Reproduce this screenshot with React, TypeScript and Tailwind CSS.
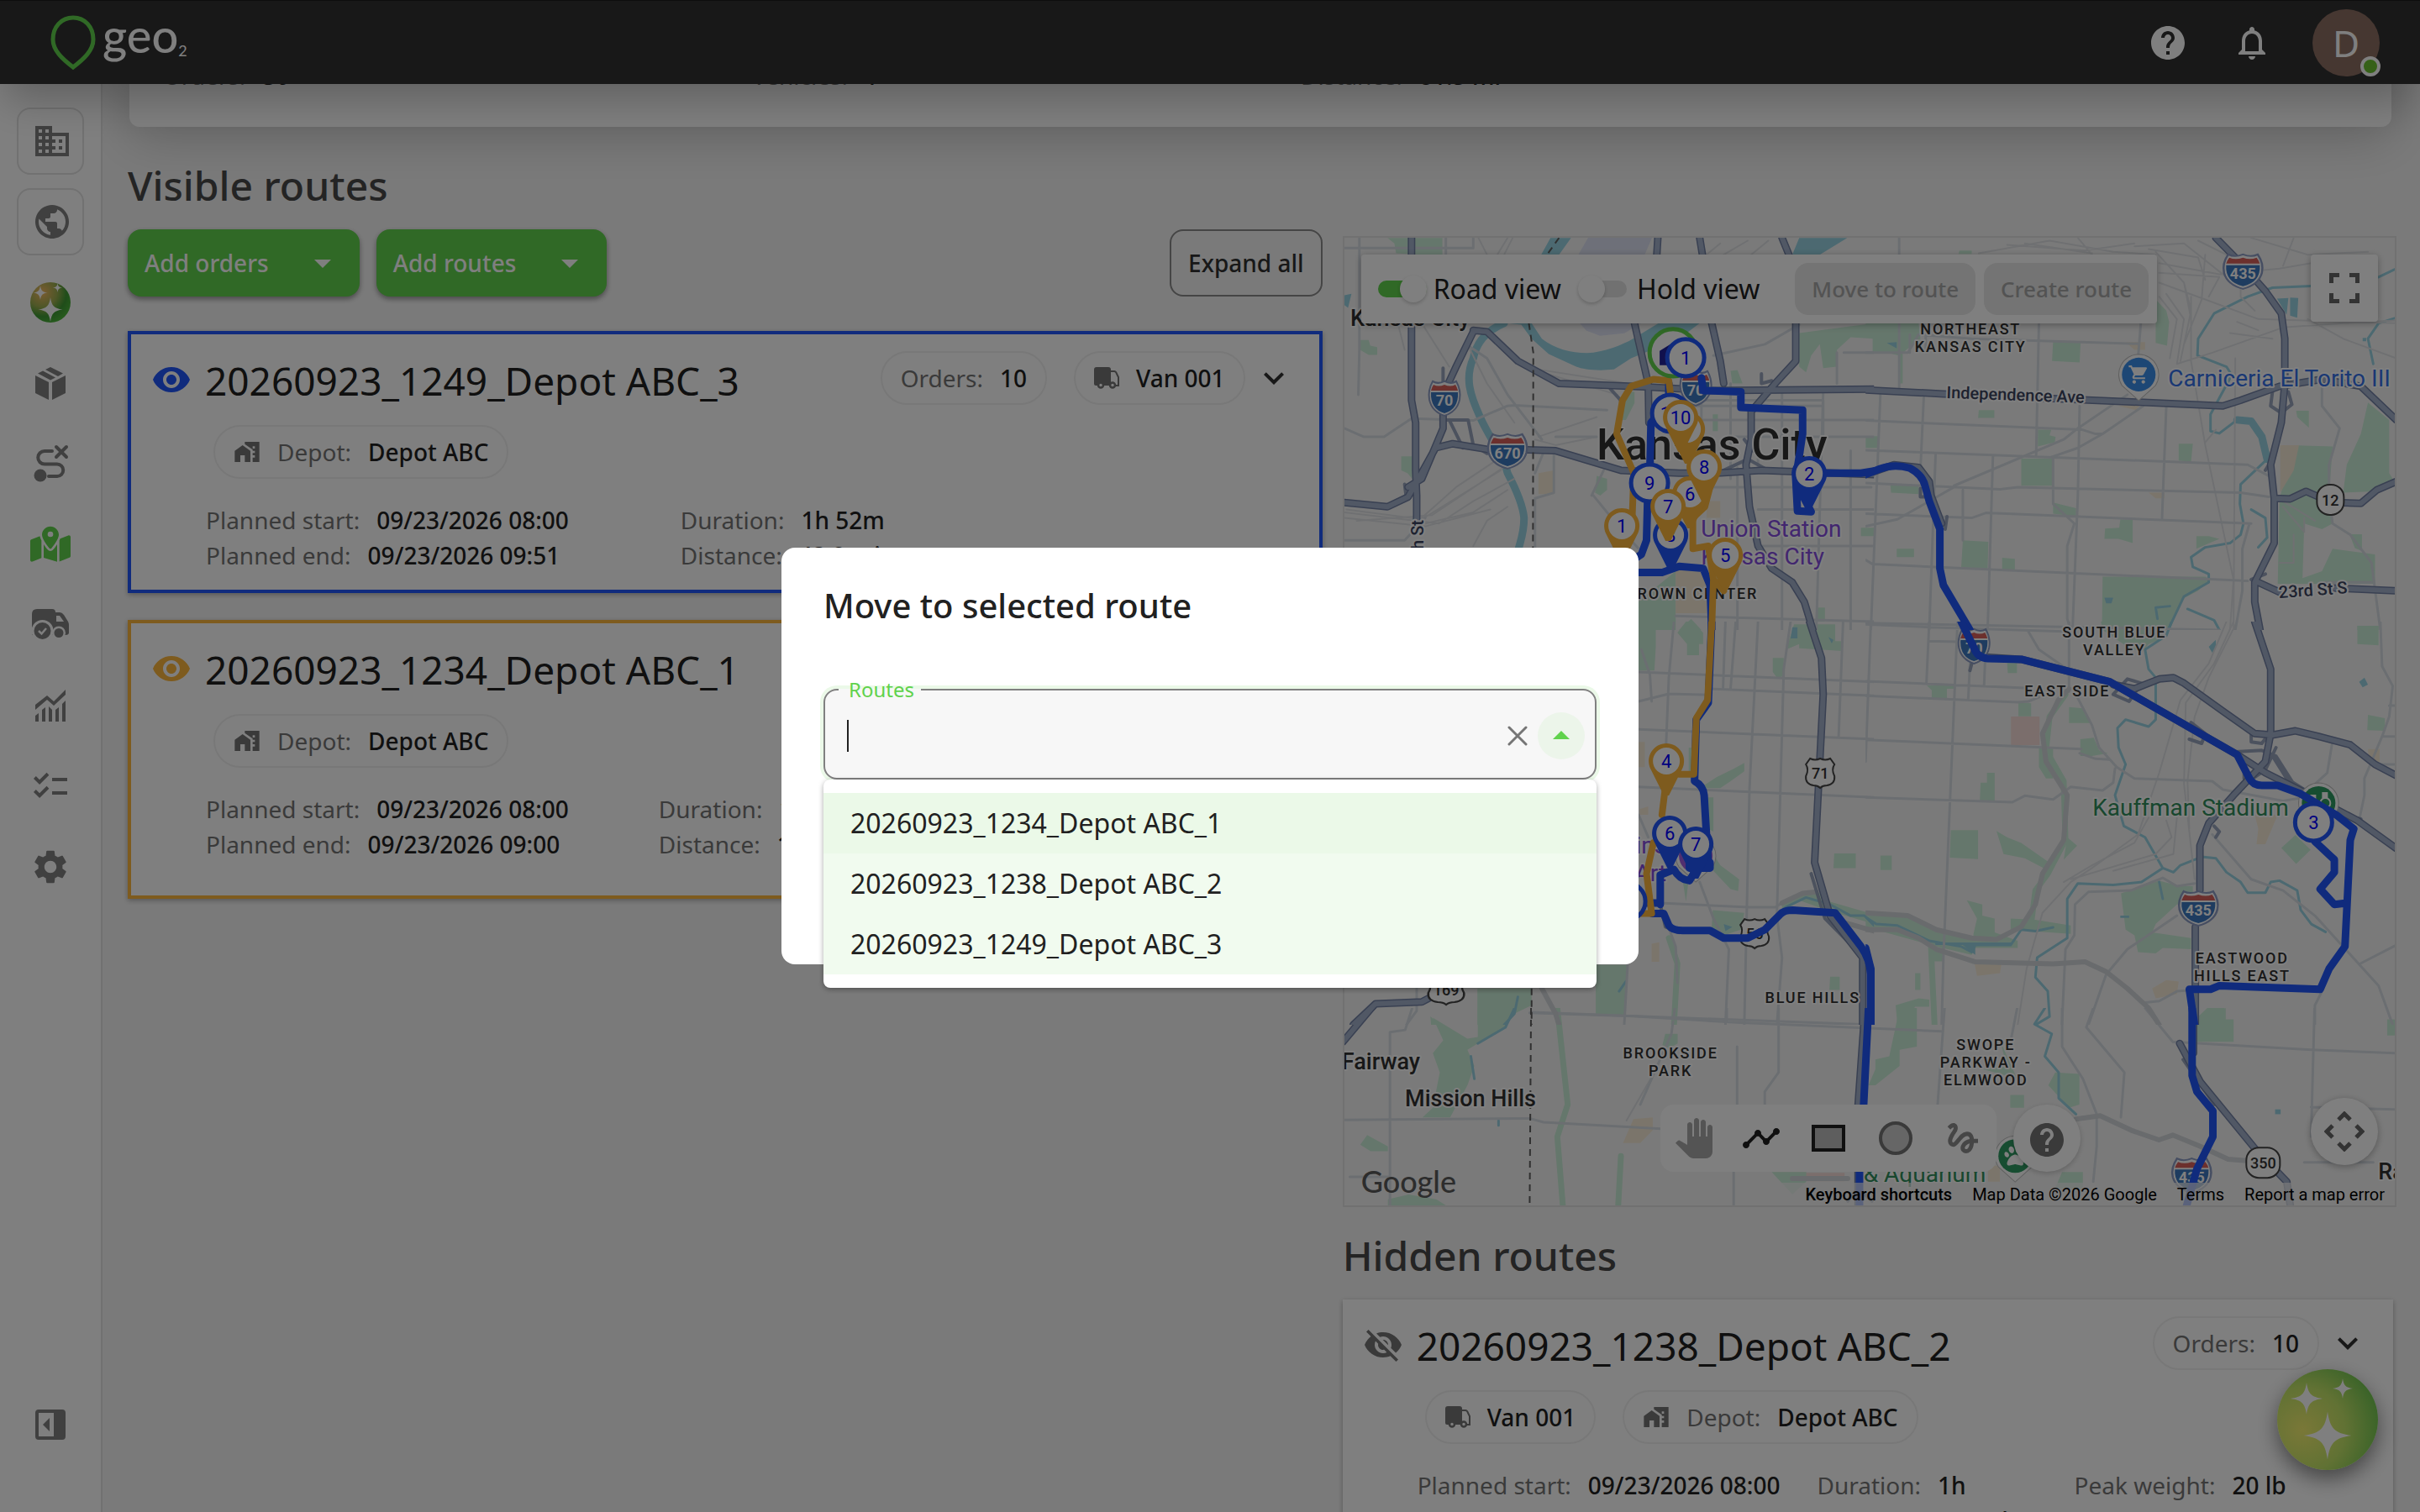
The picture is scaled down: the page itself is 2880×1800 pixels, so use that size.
import type { ReactNode } from 'react';
import clsx from 'clsx';
import {
  MdArrowDropDown,
  MdArrowDropUp,
  MdChecklist,
  MdDomain,
  MdGesture,
  MdHelp,
  MdHomeWork,
  MdKeyboardArrowDown,
  MdLocalShipping,
  MdNotificationsNone,
  MdPanTool,
  MdPublic,
  MdSettings,
  MdShoppingCart,
  MdStraighten,
  MdTimeline,
  MdVisibility,
  MdVisibilityOff,
} from 'react-icons/md';
import { FaMapLocationDot, FaPaw } from 'react-icons/fa6';

const BLUE = '#2056fb';
const AMBER = '#fcb63c';

const STAR = 'M0-10C1-3 3-1 10 0C3 1 1 3 0 10C-1 3-3 1-10 0C-3-1-1-3 0-10Z';

interface Stat {
  label: string;
  value: string;
}

interface RouteInfo {
  name: string;
  visible: boolean;
  eyeClass: string;
  cardClass: string;
  statsClass: string;
  vanInHeader: boolean;
  columns: Stat[][];
}

const routeA: RouteInfo = {
  name: '20260923_1249_Depot ABC_3',
  visible: true,
  eyeClass: 'text-[#2056fb]',
  cardClass: 'border-4 border-[#2056fb] pb-5',
  statsClass: 'gap-[133px]',
  vanInHeader: true,
  columns: [
    [
      { label: 'Planned start:', value: '09/23/2026 08:00' },
      { label: 'Planned end:', value: '09/23/2026 09:51' },
    ],
    [
      { label: 'Duration:', value: '1h 52m' },
      { label: 'Distance:', value: '43.9 mi' },
    ],
  ],
};

const routeB: RouteInfo = {
  name: '20260923_1234_Depot ABC_1',
  visible: true,
  eyeClass: 'text-[#fcb63c]',
  cardClass: 'border-4 border-[#fcb63c] pb-10',
  statsClass: 'gap-[107px]',
  vanInHeader: true,
  columns: [
    [
      { label: 'Planned start:', value: '09/23/2026 08:00' },
      { label: 'Planned end:', value: '09/23/2026 09:00' },
    ],
    [
      { label: 'Duration:', value: '1h' },
      { label: 'Distance:', value: '17.8 mi' },
    ],
  ],
};

const hiddenRoute: RouteInfo = {
  name: '20260923_1238_Depot ABC_2',
  visible: false,
  eyeClass: 'text-[#757575]',
  cardClass: 'mr-1 pb-10',
  statsClass: 'gap-11',
  vanInHeader: false,
  columns: [
    [
      { label: 'Planned start:', value: '09/23/2026 08:00' },
      { label: 'Planned end:', value: '09/23/2026 09:00' },
    ],
    [
      { label: 'Duration:', value: '1h' },
      { label: 'Distance:', value: '19.79 km' },
    ],
    [{ label: 'Peak weight:', value: '20 lb' }],
  ],
};

const routeOptions = [routeB.name, hiddenRoute.name, routeA.name];

/* ---------- Icons ---------- */

function LogoIcon() {
  return (
    <svg width="54" height="66" viewBox="0 0 54 66" fill="none">
      <path
        d="M27 3C13 3 3 14 3 29C3 42 14 52 27 62C40 52 51 42 51 29C51 14 41 3 27 3Z"
        stroke="#60d24c"
        strokeWidth="5"
      />
    </svg>
  );
}

function SparkleBall({ size, id }: { size: number; id: string }) {
  return (
    <svg width={size} height={size} viewBox="0 0 48 48">
      <defs>
        <radialGradient id={id} cx="0.3" cy="0.25" r="0.8">
          <stop offset="0" stopColor="#f5b862" />
          <stop offset="0.45" stopColor="#9fae50" />
          <stop offset="0.75" stopColor="#3f9a34" />
          <stop offset="1" stopColor="#4cb53a" />
        </radialGradient>
      </defs>
      <circle cx="24" cy="24" r="24" fill={`url(#${id})`} />
      <path d={STAR} transform="translate(24 32.500) scale(1.45)" fill="#fff" />
      <path d={STAR} transform="translate(12 12.500) scale(0.86)" fill="#fff" />
      <path d={STAR} transform="translate(32.500 6.500) scale(0.55)" fill="#fff" />
    </svg>
  );
}

function AssistantBall() {
  return (
    <svg width="120" height="120" viewBox="0 0 120 120">
      <defs>
        <radialGradient id="fab" cx="0.25" cy="0.6" r="0.85">
          <stop offset="0" stopColor="#f4f070" />
          <stop offset="0.5" stopColor="#c2e468" />
          <stop offset="1" stopColor="#62c04c" />
        </radialGradient>
      </defs>
      <circle cx="60" cy="60" r="60" fill="url(#fab)" />
      <g fill="#fff">
        <path d={STAR} transform="translate(60 79) scale(2.850)" />
        <path d={STAR} transform="translate(35 35) scale(1.900)" />
        <path d={STAR} transform="translate(78 23) scale(1.200)" />
      </g>
    </svg>
  );
}

function BoxIcon() {
  return (
    <svg width="36" height="40" viewBox="0 0 36 40" fill="currentColor">
      <path d="M0 11L16 19V40L0 32ZM20 19L36 11V32L20 40ZM3 8.500L9 5.500L24 13.500L18 16.500ZM12 4L18 1L33 8.500L27 12Z" />
    </svg>
  );
}

function RouteCrossIcon() {
  return (
    <svg width="48" height="48" viewBox="0 0 48 48" fill="none" stroke="currentColor" strokeWidth="4">
      <path strokeLinecap="round" d="M26 9H17A7.500 7.500 0 0 0 17 24.500H32A7.200 7.200 0 0 1 32 39H22" />
      <path strokeLinecap="round" d="M31 4L43 16M43 4L31 16" />
      <circle cx="12" cy="38" r="7.500" fill="currentColor" stroke="none" />
    </svg>
  );
}

function TruckCheckIcon() {
  return (
    <svg width="44" height="38" viewBox="0 0 44 38" fill="currentColor">
      <path d="M6 0H24Q28 0 28 4H33Q36 4 38 7L43 15Q44 17 44 19V28Q44 31 40 31H0V6Q0 0 6 0Z" />
      <path d="M29 8H33L38 15H29Z" fill="#fff" />
      <circle cx="12.500" cy="26" r="13" fill="#fff" />
      <circle cx="32" cy="28.500" r="8" fill="#fff" />
      <circle cx="12.500" cy="26" r="10" />
      <circle cx="32" cy="28.500" r="5.500" />
      <path d="M8 26L11.500 29.500L17 23" fill="none" stroke="#fff" strokeWidth="2.500" />
    </svg>
  );
}

function ChartIcon() {
  return (
    <svg width="36" height="38" viewBox="0 0 36 38" fill="currentColor">
      <path d="M0 18L14 7L22 14L36 0V6L22 19L14 12L0 24Z" />
      <path d="M0 31L4 28V38H0ZM8 24L12 21V38H8ZM16 20L20 24V38H16ZM24 24L28 21V38H24ZM32 17L36 13V38H32Z" />
    </svg>
  );
}

function PanelToggleIcon() {
  return (
    <svg width="36" height="36" viewBox="0 0 36 36" fill="currentColor">
      <path fillRule="evenodd" d="M4 0H32Q36 0 36 4V32Q36 36 32 36H4Q0 36 0 32V4Q0 0 4 0ZM4 4V32H22V4Z" />
      <path d="M17 10L9 18L17 26Z" />
    </svg>
  );
}

function VanIcon() {
  return (
    <svg width="30" height="26" viewBox="0 0 30 26" fill="currentColor" className="text-[#757575]">
      <path d="M3 0H17Q20 0 20 3V22H2Q0 22 0 20V3Q0 0 3 0Z" />
      <path d="M20 5H24Q26 5 27 8L29 12V22H21" fill="none" stroke="currentColor" strokeWidth="2" />
      <circle cx="8" cy="21.500" r="3" fill="#fff" stroke="currentColor" strokeWidth="2.500" />
      <circle cx="22" cy="21.500" r="3" fill="#fff" stroke="currentColor" strokeWidth="2.500" />
    </svg>
  );
}

/* ---------- Shell ---------- */

function Header() {
  return (
    <header className="relative z-20 flex h-[100px] shrink-0 items-center border-t border-[#1c1c1c] bg-[#303030] pr-12 pl-[60px] shadow-[0_24px_50px_-6px_rgba(0,0,0,0.25)]">
      <a href="#home" className="flex items-center gap-2 text-white" aria-label="geo2">
        <LogoIcon />
        <span className="pb-[18px] font-[Lato] text-[56px] leading-[60px] font-medium">
          geo<sub className="text-[18px] font-normal">2</sub>
        </span>
      </a>
      <div className="ml-auto flex items-center gap-12 text-white">
        <button type="button" aria-label="Help">
          <MdHelp className="size-12" />
        </button>
        <button type="button" aria-label="Notifications" className="ml-1">
          <MdNotificationsNone className="size-12" />
        </button>
        <button
          type="button"
          aria-label="Account"
          className="relative flex size-20 items-center justify-center rounded-full bg-[#8d6e63] text-[44px]"
        >
          D
          <span className="absolute -right-px bottom-0 size-6 rounded-full border-4 border-white bg-[#6cc230]" />
        </button>
      </div>
    </header>
  );
}

function NavItem({ label, active, children }: { label: string; active?: boolean; children: ReactNode }) {
  return (
    <a
      href={`#${label.toLowerCase()}`}
      aria-label={label}
      className={clsx('flex size-12 items-center justify-center', active ? 'text-[#60d24c]' : 'text-[#808080]')}
    >
      {children}
    </a>
  );
}

function Sidebar() {
  return (
    <nav className="flex w-[122px] shrink-0 flex-col items-center border-r-2 border-[#e2e2e2] bg-white pt-7 pb-20">
      <div className="flex flex-col gap-4 text-[#808080]">
        <button type="button" aria-label="Company" className="flex size-20 items-center rounded-2xl border-2 border-[#e2e2e2] pl-4">
          <MdDomain className="size-12 shrink-0" />
        </button>
        <button type="button" aria-label="Region" className="flex size-20 items-center rounded-2xl border-2 border-[#e2e2e2] pl-4">
          <MdPublic className="size-12 shrink-0" />
        </button>
      </div>
      <div className="mt-8 flex flex-col gap-12">
        <NavItem label="Assistant">
          <SparkleBall size={48} id="nav-ball" />
        </NavItem>
        <NavItem label="Orders">
          <BoxIcon />
        </NavItem>
        <NavItem label="Planning">
          <RouteCrossIcon />
        </NavItem>
        <NavItem label="Routes" active>
          <FaMapLocationDot className="size-12" />
        </NavItem>
        <NavItem label="Vehicles">
          <TruckCheckIcon />
        </NavItem>
        <NavItem label="Reports">
          <ChartIcon />
        </NavItem>
        <NavItem label="Tasks">
          <MdChecklist className="size-12" />
        </NavItem>
        <NavItem label="Settings">
          <MdSettings className="size-12" />
        </NavItem>
      </div>
      <button type="button" aria-label="Toggle sidebar" className="mt-auto flex size-12 items-center justify-center text-[#808080]">
        <PanelToggleIcon />
      </button>
    </nav>
  );
}

/* ---------- Route cards ---------- */

function Chip({ children }: { children: ReactNode }) {
  return (
    <span className="flex h-16 items-center rounded-full border-2 border-[#f0f0f0] px-[22px] text-[28px]">
      {children}
    </span>
  );
}

function Labelled({ label, value }: Stat) {
  return (
    <span className="flex gap-5 whitespace-nowrap">
      <span className="text-[#757575]">{label}</span>
      <span className="font-medium text-[#212121]">{value}</span>
    </span>
  );
}

function VanChip() {
  return (
    <Chip>
      <VanIcon />
      <span className="ml-5 font-medium text-[#212121]">Van 001</span>
    </Chip>
  );
}

function RouteCard({ route }: { route: RouteInfo }) {
  return (
    <article className={clsx('bg-white pt-5 shadow-[0_2px_6px_rgba(0,0,0,0.3)]', route.cardClass)}>
      <div className="flex h-[68px] items-start pr-[30px] pl-6">
        <button type="button" aria-label="Toggle route" className={clsx('flex h-[68px] items-center', route.eyeClass)}>
          {route.visible ? <MdVisibility className="size-12" /> : <MdVisibilityOff className="size-12" />}
        </button>
        <h3 className="ml-4 text-[46px] leading-[70px] text-[#212121]">{route.name}</h3>
        <div className="ml-auto flex gap-8">
          <Chip>
            <Labelled label="Orders:" value="10" />
          </Chip>
          {route.vanInHeader && <VanChip />}
        </div>
        <button type="button" aria-label="Expand" className="ml-[10px] flex h-16 items-center text-[#303030]">
          <MdKeyboardArrowDown className="size-12" />
        </button>
      </div>
      <div className="mt-5 ml-[98px] flex gap-8">
        {!route.vanInHeader && <VanChip />}
        <Chip>
          <MdHomeWork className="mr-5 size-8 text-[#757575]" />
          <Labelled label="Depot:" value="Depot ABC" />
        </Chip>
      </div>
      <div className={clsx('mt-7 ml-[89px] flex text-[28px] leading-[42px]', route.statsClass)}>
        {route.columns.map((column, index) => (
          <div key={index}>
            {column.map((stat) => (
              <Labelled key={stat.label} label={stat.label} value={stat.value} />
            ))}
          </div>
        ))}
      </div>
    </article>
  );
}

/* ---------- Map ---------- */

interface Tile {
  x: number;
  y: number;
  w: number;
  h: number;
  box: string;
  parks: string;
  parkways?: string;
  sand: string;
  lake?: string;
  rivers: string;
  creeks?: string;
  rails?: string;
  streets: string;
  avenues?: string;
  highways: string;
  ramps?: string;
  border?: string;
  blue: string;
  amber?: string;
}

const tiles: Tile[] = [
  {
    x: 1590, y: 270, w: 640, h: 480, box: '0 0 1568 1440',
    parks:
      'M150 40H310V100H240L175 95L170 60ZM70 405L95 405 100 425 120 430V458H95L70 440ZM190 820H222V900L208 880 190 870ZM1350 380L1568 345V400L1500 395 1460 440 1460 500 1420 505 1410 420 1385 460 1370 520 1350 500ZM850 590H870V630L845 690 830 690ZM1150 515L1170 512 1185 560 1155 560ZM1098 670h15v60h-15zM760 890l30 10v40l-20 20-15-10zM880 1340L990 1230V1440H880ZM1400 1360h25v50h-25zM1000 1440 1035 1400 1065 1440ZM1530 1075h38v30h-38z',
    sand: 'M590 880L635 870V955H590ZM990 1220H1080V1380H990ZM1080 980h40v60h-40z',
    lake: 'M500 345H570L600 400C640 440 700 455 750 450C800 440 850 415 880 390L940 345H1060L1000 400 860 470 810 510C760 516 720 510 700 500L620 455 570 400 540 350ZM1350 40H1490L1410 100H1330ZM625 40H685L650 100H598ZM24 245L45 240 35 290 24 280Z',
    rivers: 'M490 345C440 370 410 410 400 470C375 540 390 600 420 680C440 740 490 820 500 880C530 950 545 1000 548 1040C548 1100 535 1130 530 1160',
    rails:
      'M24 1020L300 1060 400 980 520 900M60 1050L280 1030 500 850M24 1040 260 1070 450 1010M30 1010 250 1045 480 870M240 1050 350 930 460 840M260 1060 400 1020 500 940M580 760 640 780 760 750M590 750 760 680M385 425 440 560 520 700M500 40 470 100M515 40 490 100M415 40 440 100M1120 60 1080 100M1200 50 1130 100M1260 50 1210 100M400 1140 440 1050 500 1000M200 440 180 345M250 345 330 500M600 520 820 600 830 640M590 510 850 560',
    streets:
      'M68 40V440L65 600M24 720L80 750H140L220 685 400 692 500 640 520 638 640 645 790 655M24 76H400V40M320 40V100M385 425L440 470 500 600 600 760M610 790L580 880M635 790V950L580 970V1147M640 750H760M1040 620H1420V760M1040 640H1420M1040 690H1568M1100 460L1250 420 1350 350M1480 450H1568M1460 450V560M1040 600V760M1065 620V800M1150 560V900M1300 590V1440M1420 590L1400 1440M1500 800V1440M1230 1010H1568M1240 1140H1568M990 1390L1568 1410M24 1120H200L260 1040M750 960L830 1080 880 1147M745 960L780 870M1160 750H1568M1100 930H1560M1170 860V1440M1100 1230V1440M1230 760V860M1360 760V870',
    highways:
      'M220 40V620L232 700V870L235 960V1050M400 375L350 500 312 600V720L250 900 210 930M400 370L440 375 530 480 650 560 900 572 1090 585 1568 580M24 985L150 1000 210 965 240 900 290 790 340 775 440 795 560 797 640 800 830 870 1000 880H1110L1240 870 1568 885M870 345L895 480 910 560 912 700M1095 345L1120 480 1130 560M1340 345V480L1280 560 1210 660V760L1195 850 1205 1000 1230 1140 1270 1220 1330 1270 1365 1340 1390 1440M938 40L935 100M1060 40L1068 100M1300 40L1320 100',
    ramps: 'M320 690L385 690 400 780 440 810M330 690 370 790M312 505V600M800 580 830 620M1240 525 1240 560 1270 550M1130 870 1200 830 1260 870M1190 760 1215 800M200 920 205 970',
    border: 'M650 40L615 100M562 345L575 450 574 1147',
    blue: 'M1065 540L1070 585 1180 590V645L1360 655V740L1340 900 1345 1015 1385 1018 1360 960M1430 880H1530L1568 872M970 560V640M925 690L918 700 915 860M908 980L905 1120 890 1170 840 1210M870 1235H950L1000 1213 1070 1220 1090 1280 1095 1440',
    amber:
      'M975 600L970 550 925 545 860 570 835 620 818 740 868 880 862 1080M1010 790L1050 850 1090 930 1075 1000 1040 1040V1150L1085 1140 1100 1260 1130 1300M1100 1260L1095 1440',
  },
  {
    x: 2220, y: 270, w: 660, h: 480, box: '0 0 1568 1440',
    parks:
      'M0 345H150L155 400 95 460 60 450 20 450V380H0ZM95 440h10v120h-8zM530 410H608L605 485 527 480ZM320 655h44v28h-46zM0 748H36V790H0ZM487 725H525L520 745 537 750 535 770 487 785ZM440 828H530V925H440ZM70 920L150 925V955L72 950ZM275 1120L347 1125 345 1225 270 1222ZM386 1182L422 1186V1228H386ZM88 1150H137V1180H88ZM677 1078L717 1075 720 1045H755V1130L715 1115H675ZM885 775H925L920 840 885 835ZM820 260L850 300 858 340 852 425 820 415ZM670 1250H960L975 1260 940 1300 895 1330 860 1440H668ZM1200 780L1320 785 1310 960 1320 1060 1290 1080 1240 1060 1235 1255 1290 1230 1320 1150 1440 1170V1275H1165L1170 970 1190 880ZM1420 628L1480 690V880L1495 910 1440 945 1350 950 1360 850 1400 740ZM1217 657H1253V718L1220 680ZM530 985L595 1005V1035L530 1025ZM1368 1098h35v60l-20-10zM935 1105H970L1000 1115 935 1150ZM1390 1425h60v15h-60zM265 85h35v12h-37z',
    sand: 'M1172 780H1225L1210 870 1172 950ZM735 412H790V440H760ZM715 640 780 630 765 655ZM800 950H845V970H820Z',
    lake: 'M1163 257L1195 255 1190 315ZM1200 253L1223 255 1220 325 1200 318ZM675 1325H700L695 1345H680ZM60 415 88 412V435ZM1405 397h10v12h-10z',
    rivers: 'M1050 690 1090 695 1120 750 1135 830',
    creeks:
      'M1260 212L1150 218 1080 250L985 310 940 400 938 460 1020 500 1035 530 975 670 975 730 1000 738 1050 690M1135 830 1060 920 1058 990 1068 1060 1060 1100 1030 1130 960 1145 920 1180 925 1215 970 1240 970 1270 900 1320 855 1440M1090 1010 1130 1040 1135 1110 1110 1145M1500 325L1450 345 1420 400 1435 490M860 1355 820 1360 825 1400M910 1365L985 1405 1000 1440M1450 180L1500 150',
    rails:
      'M320 95L520 50 700 90 820 100M400 65L620 85 760 60M450 60 640 95M600 40 640 100M830 130L1000 170 1170 150 1260 130M830 200L960 260 1110 330 1500 345M880 490L980 450 1180 360 1350 345 1500 335M830 250 880 330 860 470M850 240 900 330 880 490M900 200 920 300 890 480M960 100 950 260 900 420M920 250V480L960 780 1040 1260 1030 1440M1045 470 1040 1440M940 50 1100 150M1030 380 1150 400M1050 340 1110 370M1090 40 1250 100 1420 90M1210 40 1180 140M830 165 1000 180 970 250M1500 470 1350 400 1250 330M760 70 900 60 1020 180M800 80 940 110 960 190M820 90 900 200 920 330M960 770 990 725M1060 130V250L1100 300M1180 980 1270 1050M1180 1000 1240 1090 1240 1040M1210 1100V1200H1170',
    streets:
      'M0 450H120L150 385 300 400 770 418M0 692L610 725M0 798L1080 850 1140 890M0 915L380 938 430 930 1060 950 1140 965M0 1025L300 1040 340 1022 1090 1060M0 1190L20 1205 1080 1265M0 1415L1000 1440M95 40V590M42 595L15 1440M165 595L155 870M198 810L180 1440M360 820L345 1440M275 940V1120M490 345L482 820M605 640L600 960 585 1440M778 345 770 470M850 640 838 1040M530 830V990L590 1060 570 1140V1400L580 1440M740 600L600 720 560 760 250 925M785 640L670 740 600 790 520 825M670 740H650L600 720M250 930L90 1045 0 1070M1290 570V640L1340 720 1310 850V960L1320 1060 1370 1100 1430 1200 1455 1440M1085 1060L1065 1150V1300L1045 1440M170 370V450M125 385V450M0 640M1430 1270H1300',
    highways:
      'M990 40L1060 130 1130 230 1175 310 1185 400V560L1175 700 1145 850 1155 970 1155 1130 1100 1270V1340L1115 1440M0 583L220 597 740 625 1010 640 1060 620 1170 570 1290 545 1400 570 1500 690M1160 970L1200 972 1245 945 1290 970 1330 985 1400 988 1445 940 1500 910M1110 1270L1170 1305M1320 1290 1500 1300M0 885 80 850 150 860 180 910 185 960 215 1060',
    ramps: 'M1150 590 1145 640 1175 665 1205 635 1195 590M1130 870 1150 830M155 935 155 965 180 965M230 1035 225 1080M1090 1260 1130 1240',
    blue: 'M0 885L40 865Q80 845 125 862Q160 885 168 925L180 980 210 1080V1220L220 1280 295 1440',
  },
  {
    x: 1590, y: 740, w: 640, h: 480, box: '0 0 1568 1440',
    parks:
      'M882 0H975V25H932V90L928 175H882ZM1020 0h20l30 40v40h-12v40h-35V80L995 40ZM1312 100L1335 10H1455V70H1475V105L1350 95V80ZM1273 130H1305V195L1285 200 1273 180ZM1110 555L1160 525 1190 505V535L1150 570 1120 595H1060ZM1075 628H1100V750L1085 740ZM1100 830 1120 870 1175 920 1172 962 1150 955 1100 890ZM1098 1030L1190 1040 1180 1100 1130 1120 1095 1090ZM1452 828H1515V880H1450ZM1010 920H1028L1020 1000ZM412 1310H570V1370L520 1400 490 1440H412ZM757 1225H850L843 1405H757ZM1440 1268H1468V1315H1438ZM1300 1010L1360 965 1400 960 1440 1000 1568 1045V1080L1430 1030 1350 995 1300 1040ZM1028 450h12v100h-12zM275 1410l30 30h-28z',
    parkways: 'M970 1130 995 1220 985 1440',
    sand: 'M920 1150 942 1145V1215H920ZM882 430H900V520H882ZM885 670 910 660V690H885Z',
    lake: 'M1330 20H1345V60H1325ZM1130 1080 1155 1090 1135 1105ZM1435 55 1450 65 1445 78Z',
    rivers: '',
    creeks: 'M1310 1020 1370 985 1440 1010 1500 1050 1540 1050 1568 1085M845 1285 825 1320M530 1340 520 1400 490 1440',
    rails: '',
    streets:
      'M882 180L1568 215M882 385L1568 420M882 590L1568 628M1090 240 1568 265M882 285 970 258 1090 262M985 0 970 200 962 440M1135 0 1128 240M1165 0 1150 240M1230 0 1205 600 1190 1440M1325 0 1305 170 1285 1050 1300 1200 1285 1440M1478 0 1465 410M945 1005 1200 1020 1280 1020 1300 1005M960 1060 990 1160 995 1290M1060 930 1100 1060 1145 1170 1135 1440M570 1395 1568 1440M235 1310V1390L205 1440M850 1225 840 1440M882 690 910 770M890 100 915 190 920 285',
    avenues: 'M600 1310 640 1400 650 1440M1440 1060 1568 1105M1300 1005 1360 970 1400 965',
    highways: 'M1380 0L1415 130 1420 260 1395 860 1440 1050 1535 1200V1440M50 1440L115 1365 250 1358 270 1345',
    ramps: 'M1385 900 1425 1060 1530 1190M945 1010 960 1090 1000 1110',
    border: 'M570 1310V1440',
    blue: 'M1095 0 1085 290 1050 350 1045 570Q1070 585 1073 620L1085 870M1030 880H1090V860H1030ZM945 1010V905L985 885Q1000 920 1030 925L1045 895M920 1042H955L970 1085Q980 1103 1010 1103H1090L1130 1130H1200L1250 1100 1295 1045Q1305 1030 1330 1030L1455 1040 1530 1160Q1558 1210 1558 1260V1440M880 1005H945',
    amber: 'M1095 0 1083 280 1050 345 1043 545H1000M960 590 950 690M925 790 905 900 920 1042H870',
  },
  {
    x: 2220, y: 740, w: 660, h: 480, box: '0 0 1568 1440',
    parks:
      'M665 0H865L830 65 800 80 780 110 740 90 670 30ZM400 148h28v36h-26zM432 288L468 292V338H432ZM173 228H250V240L230 240V275H187V245ZM575 305L615 310 635 362H575ZM607 420L645 415 660 460 685 470 640 480H607ZM325 575H343V540H365V640H323ZM370 748L400 770 440 790 530 870 510 885 450 845 390 830ZM241 745H318V848L238 843ZM42 835H74V887H42ZM286 995L330 1010V1050L365 1060V1110L430 1140V1165H305V1115L315 1060ZM410 1060 480 1065 580 1085V1115L410 1100ZM0 1045L120 1055 200 1105 310 1125V1160L300 1190 200 1160 0 1090ZM722 970L830 925 890 945H925V1000L880 1010 820 1080 810 1110 920 1130V1170L840 1165 820 1185 770 1180 760 1120 735 1100ZM1215 762L1258 815 1217 865 1175 808ZM1390 15H1450V85L1390 80ZM1420 333L1468 345V390L1418 388ZM178 1165h42v48h-40zM140 1255h15v60h-15zM150 1345l30 5v25h-40l-20 40-20 25H90l-5-70zM940 1420 1018 1380V1440H940ZM570 770 598 800 560 850ZM490 450H530V560H510L490 520Z',
    parkways: 'M565 260 520 340 510 460 560 570 565 780 515 900 480 960 470 1060M185 1165 195 1440',
    sand: 'M307 1215H385L380 1255 315 1265ZM810 1310L850 1280 885 1285 880 1330 820 1345ZM1100 690H1165L1130 795H1105L1110 740ZM1420 455h33v45h-30z',
    lake: 'M970 90L990 65V90L980 112ZM1395 215 1410 200 1420 225 1405 235ZM270 1150H310V1190ZM720 1050H745V1058H720Z',
    rivers: '',
    creeks:
      'M865 0 850 50 790 100 800 170 820 200V350L800 375 735 350 712 380 715 450 735 510 705 620 730 730 790 770 840 880 780 930 700 940 600 935 570 990 570 1130 485 1200 480 1270 515 1320 520 1410 480 1440M840 880 870 895 890 870 950 840 990 845 1020 895 1060 930 1080 968H1130L1145 930 1170 925 1220 960 1230 1030 1260 1080 1300 1108M440 1100 480 1105 530 1092M830 930 840 990M0 1055 30 1080 90 1085 180 1140 270 1160 300 1180 310 1155 410 1155 440 1100M200 1150 410 1150',
    rails:
      'M1020 0 970 150 890 280 830 540 770 760 640 880 580 930 500 1040 455 1240 430 1440M1040 0 985 150 905 290 900 580 930 920M1050 0 970 200 930 340 910 570 915 740M850 710 865 770 820 830 580 920M880 700 870 830 700 890M800 700 760 790 640 870 560 930',
    streets:
      'M0 10 180 20 560 35M180 70 260 72M0 213 450 237M0 265 430 288 460 285 490 270M0 422 610 455M0 628 415 645 450 622 530 635 580 590 670 603 700 575 705 525M710 520 760 560 980 570 1010 600M180 0 172 220M260 0 220 1200 215 1440M340 70 335 230M295 150 290 280M15 0 0 500M575 0V250M460 35 490 100 570 170M590 250 640 370 660 450 710 520M605 470 650 490 690 493M555 1440 565 1170 590 1120 592 1010 630 965 750 960 840 915 880 945 930 935M980 760 1090 920 1180 960 1270 1050 1450 1300 1490 1440M1500 1155 1400 1220M1290 1320 1270 1370V1440M790 1360 830 1355 880 1320 930 1315M1320 425 1305 540 1270 580M1455 0 1460 160 1490 230 1480 340 1460 410 1410 560V620L1395 710M1500 410H1460M1010 600 1180 640 1230 630M630 1440 680 1260 740 1170 880 1050M1440 510H1500M1480 300H1500',
    avenues:
      'M0 1040 120 1050 200 1100 300 1130 370 1135 440 1090 480 1010 500 900 560 780 570 620 510 500 500 400 545 280 575 240M0 1100 90 1100 150 1130 200 1170 310 1215 530 1222 620 1215 680 1250 740 1310 800 1380 830 1440',
    highways:
      'M1100 0 1145 170V400L1130 500 1040 620 970 720 945 800V960M932 1090V1440M320 125L440 135 690 215 1050 475 1130 540 1240 610 1390 710 1500 810M700 225 760 240 830 205 870 200 900 220 1010 320 1100 400 1150 405 1215 390 1280 410 1370 440 1440 510 1500 550',
    ramps:
      'M1045 465 1120 460 1160 480 1210 580M1090 400V430L1120 435 1140 400M1160 450 1130 530 1060 590M1070 500 1070 560M985 730 1000 750 990 770M700 260 740 205 780 220 745 285 700 260M915 420 950 435 960 400 920 360M300 150 295 175M1150 480 1190 560 1240 600M1385 700 1400 705',
    blue: 'M270 0 305 90Q315 130 345 132L440 135 690 215 1050 475 1085 560Q1095 585 1120 585H1165L1230 615 1330 690 1380 740 1370 780 1355 1160 1310 1240 1285 1313 1000 1300 975 1313H915L930 1440M1270 785 1325 850 1325 895 1285 955 1325 1010 1360 1005M0 1165 15 1240 15 1440',
  },
  {
    x: 1590, y: 1200, w: 1290, h: 600, box: '0 0 1568 1568',
    parks:
      'M205 0H260L245 60 205 110 190 130 200 180 190 240 165 340H125L140 310 150 200 140 140 155 100 140 30 190 95 205 90ZM476 80h18v30l-12 15-10-10zM815 0H840V120L815 130V180L780 240H770L780 190V160L800 150ZM1245 30 1260 0H1285V35H1298V105H1245ZM1040 200 1075 205V300L1060 310 1030 240ZM45 395 75 430V445H50L35 425ZM75 595l30-15 40 15 15 20H75zM630 510H680V540L660 580ZM1050 510h30v50h-40zM1520 35h12v50h-12zM975 270h20v40h-20zM935 190 970 180 960 100 985 220Z',
    parkways: 'M320 0 325 100 335 300 320 400 328 615M412 460 408 615',
    sand: 'M430 345 458 340V380L440 420H415ZM943 490H960V540H943Z',
    lake: 'M1358 315h8v15h-8z',
    rivers: '',
    creeks: 'M1025 0 1010 50 1035 80 1025 150 1045 200 1045 280 1070 330M258 0 245 60 205 110M195 150 200 220M235 350V365',
    rails: 'M455 220 420 350',
    streets:
      'M280 15 430 25 580 45 875 72M565 0V40M640 0V200L620 260V300M490 0 485 80 440 300M10 348 280 343 300 355 470 375M78 75V615M78 75 100 68 110 0M580 120V300M880 0 870 300M985 0 975 110M1050 0V120L1080 220 1100 330V430L1095 540M1095 0 1085 60 1140 200 1135 340M1210 105 1410 130 1532 140M1415 0 1410 400M1170 0 1210 105M1410 308 1532 315M575 510V615M20 525H78M1400 480H1500',
    avenues: 'M1070 345 1105 335 1150 380 1190 410 1210 395 1250 430 1290 470 1320 475M660 530H740',
    highways: 'M10 105 55 -10M765 0 755 300M755 510V615M1240 0V140M1220 110 1250 230 1330 440 1375 540 1380 615',
    ramps: 'M1225 160 1270 300M740 600 755 560 775 600',
    border: 'M282 0 280 615',
    blue: 'M770 0 763 300 757 510V615M1238 0V210L1245 260 1268 320V400L1245 500 1230 615',
  },
];

const layers: { key: keyof Tile; fill?: string; stroke?: string; width?: number; dash?: string }[] = [
  { key: 'parks', fill: '#cbeed8' },
  { key: 'parkways', stroke: '#cbeed8', width: 7 },
  { key: 'sand', fill: '#f7ebd6' },
  { key: 'lake', fill: '#98d3e2' },
  { key: 'rivers', stroke: '#98d3e2', width: 9 },
  { key: 'creeks', stroke: '#98d3e2', width: 3 },
  { key: 'rails', stroke: '#dfe1e4', width: 2 },
  { key: 'streets', stroke: '#d6dce3', width: 3 },
  { key: 'avenues', stroke: '#d3d6da', width: 6 },
  { key: 'ramps', stroke: '#98a4bd', width: 4 },
  { key: 'highways', stroke: '#7281a4', width: 9 },
  { key: 'highways', stroke: '#a2b0cb', width: 6 },
  { key: 'border', stroke: '#606060', width: 2, dash: '8 6' },
  { key: 'blue', stroke: BLUE, width: 9 },
  { key: 'amber', stroke: AMBER, width: 8 },
];

interface Shield {
  kind: 'interstate' | 'us' | 'state';
  x: number;
  y: number;
  text: string;
}

const shields: Shield[] = [
  { kind: 'interstate', x: 1719, y: 474, text: '70' },
  { kind: 'interstate', x: 1794, y: 537, text: '670' },
  { kind: 'interstate', x: 2018, y: 462, text: '70' },
  { kind: 'interstate', x: 2669, y: 323, text: '435' },
  { kind: 'interstate', x: 2349, y: 769, text: '70' },
  { kind: 'interstate', x: 2616, y: 1081, text: '435' },
  { kind: 'interstate', x: 2608, y: 1399, text: '435' },
  { kind: 'us', x: 2166, y: 920, text: '71' },
  { kind: 'us', x: 2088, y: 1111, text: '56' },
  { kind: 'us', x: 1721, y: 1178, text: '169' },
  { kind: 'state', x: 2773, y: 595, text: '12' },
  { kind: 'state', x: 2693, y: 1384, text: '350' },
];

function ShieldMark({ kind, x, y, text }: Shield) {
  const s = text.length > 2 ? 1.25 : 1;
  if (kind === 'interstate') {
    return (
      <g transform={`translate(${x} ${y})`}>
        <g transform={`scale(${s} 1)`}>
          <path
            d="M-14-20Q-8-16 0-20Q8-16 14-20Q20-9 18 2Q15 16 0 21Q-15 16-18 2Q-20-9-14-20Z"
            fill="#fff"
            stroke="#8c9cc4"
            strokeWidth="2"
          />
          <path d="M-13-16Q-7-13 0-16Q7-13 13-16Q15-13 16-9H-16Q-15-13-13-16Z" fill="#d9605a" />
          <path d="M-16-7H16Q17 13 0 18Q-17 13-16-7Z" fill="#3c78c0" />
        </g>
        <text y="9" textAnchor="middle" fill="#fff" className="text-[18px] font-bold">
          {text}
        </text>
      </g>
    );
  }
  return (
    <g transform={`translate(${x} ${y})`}>
      {kind === 'us' ? (
        <path
          transform={`scale(${s} 1)`}
          d="M-12-17Q-6-14 0-17Q6-14 12-17L17-10Q13-4 17 4Q18 13 8 15Q3 15 0 18Q-3 15-8 15Q-18 13-17 4Q-13-4-17-10Z"
          fill="#fff"
          stroke="#444"
          strokeWidth="2"
        />
      ) : (
        <rect x={-16 * s} y="-18" width={32 * s} height="36" rx="15" fill="#fff" stroke="#444" strokeWidth="2" />
      )}
      <text y="7" textAnchor="middle" fill="#333" className="text-[18px] font-medium">
        {text}
      </text>
    </g>
  );
}

interface PlaceLabel {
  x: number;
  y: number;
  lines: string[];
  className: string;
  anchor?: 'start' | 'middle' | 'end';
  leading?: number;
  rotate?: number;
}

const AREA = 'fill-[#303030] text-[18px] font-medium tracking-widest';
const TOWN = 'fill-[#303030] text-[27px] font-medium';
const ROAD = 'fill-[#3c4560] text-[20px] font-medium';

const labels: PlaceLabel[] = [
  { x: 1607, y: 388, lines: ['Kansas City'], className: TOWN },
  { x: 1900, y: 547, lines: ['Kansas City'], className: 'fill-[#303030] text-[52px] font-medium' },
  { x: 2024, y: 639, lines: ['Union Station', 'Kansas City'], className: 'fill-[#844cdf] text-[28px]', leading: 33 },
  { x: 2092, y: 713, lines: ['CROWN CENTER'], className: AREA, anchor: 'end' },
  { x: 2345, y: 398, lines: ['NORTHEAST', 'KANSAS CITY'], className: AREA, anchor: 'middle' },
  { x: 2316, y: 474, lines: ['Independence Ave'], className: ROAD, rotate: 2 },
  { x: 2712, y: 712, lines: ['23rd St S'], className: ROAD, rotate: -4 },
  { x: 1694, y: 672, lines: ['7th St'], className: ROAD, rotate: -90 },
  { x: 2580, y: 460, lines: ['Carniceria El Torito III'], className: 'fill-[#3470e8] text-[28px]' },
  { x: 2516, y: 759, lines: ['SOUTH BLUE', 'VALLEY'], className: AREA, anchor: 'middle' },
  { x: 2460, y: 829, lines: ['EAST SIDE'], className: AREA, anchor: 'middle' },
  { x: 2490, y: 971, lines: ['Kauffman Stadium'], className: 'fill-[#308e5c] text-[28px]' },
  { x: 2668, y: 1147, lines: ['EASTWOOD', 'HILLS EAST'], className: AREA, anchor: 'middle' },
  { x: 2157, y: 1194, lines: ['BLUE HILLS'], className: AREA, anchor: 'middle' },
  { x: 1988, y: 1260, lines: ['BROOKSIDE', 'PARK'], className: AREA, anchor: 'middle' },
  { x: 2363, y: 1250, lines: ['SWOPE', 'PARKWAY -', 'ELMWOOD'], className: AREA, anchor: 'middle' },
  { x: 1983, y: 1016, lines: ['Atkins', 'of Art'], className: 'fill-[#844cdf] text-[28px]', anchor: 'end', leading: 33 },
  { x: 1690, y: 1273, lines: ['Fairway'], className: TOWN, anchor: 'end' },
  { x: 1672, y: 1317, lines: ['Mission Hills'], className: TOWN },
  { x: 2363, y: 1407, lines: ['& Aquarium'], className: 'fill-[#308e5c] text-[28px]', anchor: 'end' },
  { x: 2830, y: 1404, lines: ['Raytown'], className: TOWN },
];

interface Stop {
  x: number;
  y: number;
  n: string;
  color: string;
  ring?: boolean;
}

const stops: Stop[] = [
  { x: 1988, y: 492, n: '10', color: BLUE, ring: true },
  { x: 2008, y: 511, n: '9', color: AMBER },
  { x: 2000, y: 497, n: '10', color: AMBER },
  { x: 1963, y: 575, n: '9', color: BLUE, ring: true },
  { x: 1988, y: 637, n: '8', color: BLUE },
  { x: 2011, y: 588, n: '6', color: AMBER },
  { x: 2028, y: 556, n: '8', color: AMBER },
  { x: 1985, y: 603, n: '7', color: AMBER },
  { x: 1930, y: 626, n: '1', color: AMBER },
  { x: 2053, y: 661, n: '5', color: AMBER },
  { x: 2153, y: 564, n: '2', color: BLUE },
  { x: 2006, y: 426, n: '1', color: BLUE, ring: true },
  { x: 1983, y: 906, n: '4', color: AMBER },
  { x: 1987, y: 992, n: '6', color: BLUE },
  { x: 2018, y: 1005, n: '7', color: BLUE },
  { x: 1936, y: 1073, n: '5', color: BLUE, ring: true },
  { x: 2753, y: 979, n: '3', color: BLUE, ring: true },
];

function StopMarker({ x, y, n, color, ring }: Stop) {
  return (
    <g transform={`translate(${x} ${y})`}>
      {ring ? (
        <circle r="22" fill="#fff" stroke={color} strokeWidth="5" />
      ) : (
        <>
          <path d="M0-21A21 21 0 0 1 19 9L3 41H-3L-19 9A21 21 0 0 1 0-21Z" fill={color} />
          <circle r="16" fill="#fff" />
        </>
      )}
      <text y="8" textAnchor="middle" fill="#0000ff" className="text-[22px]">
        {n}
      </text>
    </g>
  );
}

function PoiPin({ x, y, color, children }: { x: number; y: number; color: string; children?: ReactNode }) {
  return (
    <g transform={`translate(${x} ${y})`}>
      <path d="M0-24A24 24 0 0 1 20 13L0 31L-20 13A24 24 0 0 1 0-24Z" fill="#fff" stroke="#c0c0c0" />
      <circle r="20" fill={color} />
      {children}
    </g>
  );
}

function MapCanvas() {
  return (
    <svg
      className="absolute inset-0 size-full font-[Roboto]"
      viewBox="1600 283 1250 1152"
      preserveAspectRatio="xMidYMid slice"
      role="img"
      aria-label="Route map"
    >
      <path d="M1890 283H1966L1957 304H1878ZM1880 385H1953L1933 397 1904 400 1888 394Z" fill="#dde1f2" />
      <path d="M2393 853H2427V887H2393ZM2135 1396H2195V1406H2150Z" fill="#f6ddd8" />
      {layers.map((layer, index) => (
        <g key={index}>
          {tiles.map((tile) => (
            <svg
              key={`${tile.x}-${tile.y}`}
              x={tile.x}
              y={tile.y}
              width={tile.w}
              height={tile.h}
              viewBox={tile.box}
              preserveAspectRatio="none"
            >
              <path
                d={String(tile[layer.key] ?? '')}
                fill={layer.fill ?? 'none'}
                stroke={layer.stroke}
                strokeWidth={layer.width}
                strokeDasharray={layer.dash}
                strokeLinejoin="round"
                strokeLinecap={layer.dash ? 'butt' : 'round'}
                vectorEffect="non-scaling-stroke"
              />
            </svg>
          ))}
          {/* Place names sit between the base map and the driven routes */}
          {layer.key === 'border' && (
            <g>
              {shields.map((shield) => (
                <ShieldMark key={`${shield.x}-${shield.y}`} {...shield} />
              ))}
              {labels.map((label) => (
                <text
                  key={label.lines[0] + label.x}
                  transform={`translate(${label.x} ${label.y}) rotate(${label.rotate ?? 0})`}
                  textAnchor={label.anchor ?? 'start'}
                  className={clsx('stroke-white stroke-4 [paint-order:stroke]', label.className)}
                  strokeLinejoin="round"
                >
                  {label.lines.map((line, row) => (
                    <tspan key={line} x="0" y={row * (label.leading ?? 21)}>
                      {line}
                    </tspan>
                  ))}
                </text>
              ))}
              <PoiPin x={2545} y={446} color="#3a8eea">
                <MdShoppingCart x="-13" y="-13" size={26} color="#fff" />
              </PoiPin>
              <PoiPin x={2759} y={956} color="#2f9a62">
                <rect x="-10" y="-10" width="7" height="7" fill="#fff" />
                <rect x="4" y="-13" width="7" height="7" fill="#fff" />
                <circle cx="8" cy="0" r="6" fill="none" stroke="#fff" strokeWidth="2" />
              </PoiPin>
              <PoiPin x={2398} y={1376} color="#2f9a62">
                <FaPaw x="-13" y="-13" size={26} color="#fff" />
              </PoiPin>
              <PoiPin x={2018} y={1019} color="#a45fdf" />
            </g>
          )}
        </g>
      ))}
      <circle cx="1991" cy="420" r="28" fill="#fff" stroke="#60d24c" strokeWidth="5" />
      <path d="M1975 435V418L1991 408L2007 418V435Z" fill="#22229a" />
      {stops.map((stop, index) => (
        <StopMarker key={index} {...stop} />
      ))}
    </svg>
  );
}

function SmallSwitch({ label, on }: { label: string; on?: boolean }) {
  return (
    <label className="flex items-center text-[32px] leading-10 text-[#212121]">
      <span className="relative flex h-8 w-[58px] items-center">
        <input type="checkbox" defaultChecked={on} className="peer absolute inset-0 z-10 opacity-0" />
        <span className={clsx('h-5 w-full rounded-full', on ? 'bg-[#60d24c]' : 'bg-[#e2e2e2]')} />
        <span
          className={clsx(
            'absolute size-8 rounded-full bg-white shadow-[0_2px_4px_rgba(0,0,0,0.2)]',
            on ? 'right-0' : 'left-0',
          )}
        />
      </span>
      <span className={on ? 'ml-2' : 'ml-3'}>{label}</span>
    </label>
  );
}

function MapPanel() {
  return (
    <section className="relative h-[1156px] overflow-hidden border-2 border-[#e2e2e2] bg-[#f5f5f5]">
      <MapCanvas />

      <div className="absolute top-5 left-5 flex h-[82px] items-center rounded bg-white pr-[10px] pl-5 shadow-[0_2px_8px_rgba(0,0,0,0.3)]">
        <SmallSwitch label="Road view" on />
        <div className="ml-5">
          <SmallSwitch label="Hold view" />
        </div>
        <button type="button" disabled className="ml-[42px] h-[62px] rounded-2xl bg-[#e8e8e8] px-5 text-[26px] font-medium text-[#a6a6a6]">
          Move to route
        </button>
        <button type="button" disabled className="ml-[10px] h-[62px] rounded-2xl bg-[#e8e8e8] px-5 text-[26px] font-medium text-[#a6a6a6]">
          Create route
        </button>
      </div>

      <button
        type="button"
        aria-label="Fullscreen"
        className="absolute top-5 right-5 flex size-20 items-center justify-center rounded bg-white shadow-[0_2px_8px_rgba(0,0,0,0.3)]"
      >
        <svg width="36" height="36" viewBox="0 0 36 36" fill="none" stroke="#666" strokeWidth="5">
          <path d="M2.500 12V2.500H12M24 2.500H33.500V12M33.500 24V33.500H24M12 33.500H2.500V24" />
        </svg>
      </button>

      <div className="absolute right-0 bottom-0 left-[520px] flex h-[27px] items-center justify-end gap-6 bg-[#f5f5f5]/70 pr-3 font-[Roboto] text-[20px] whitespace-nowrap text-black">
        <button type="button" className="font-medium">
          Keyboard shortcuts
        </button>
        <span>Map Data ©2026 Google</span>
        <a href="#terms">Terms</a>
        <a href="#report">Report a map error</a>
      </div>
      <span className="absolute bottom-[6px] left-5 font-[Lato] text-[36px] leading-[46px] font-medium text-[#5a5a5a]">Google</span>

      <div className="absolute bottom-10 left-[376px] flex h-20 items-center rounded-2xl bg-white">
        <button type="button" aria-label="Pan" className="flex size-20 items-center justify-center text-[#a8a8a8]">
          <MdPanTool className="size-12" />
        </button>
        <button type="button" aria-label="Polyline" className="flex size-20 items-center justify-center text-[#202020]">
          <MdTimeline className="size-12" />
        </button>
        <button type="button" aria-label="Rectangle" className="flex size-20 items-center justify-center">
          <span className="h-8 w-10 border-4 border-[#202020] bg-[#bcbcbc]" />
        </button>
        <button type="button" aria-label="Circle" className="flex size-20 items-center justify-center">
          <span className="size-10 rounded-full border-4 border-[#757575] bg-[#cccccc]" />
        </button>
        <button type="button" aria-label="Freehand" className="flex size-20 items-center justify-center text-[#8c8c8c]">
          <MdGesture className="size-12" />
        </button>
      </div>
      <button
        type="button"
        aria-label="Map help"
        className="absolute bottom-10 left-[796px] flex size-20 items-center justify-center rounded-full bg-white pt-1 text-[#757575] shadow-[0_2px_6px_rgba(0,0,0,0.2)]"
      >
        <MdHelp className="size-12" />
      </button>
      <button
        type="button"
        aria-label="Camera controls"
        className="absolute right-5 bottom-12 flex size-20 items-center justify-center rounded-full bg-white shadow-[0_2px_8px_rgba(0,0,0,0.3)]"
      >
        <svg width="48" height="48" viewBox="0 0 48 48" fill="none" stroke="#666" strokeWidth="5">
          <path d="M17 10L24 3L31 10M17 38L24 45L31 38M10 17L3 24L10 31M38 17L45 24L38 31" />
        </svg>
      </button>
    </section>
  );
}

/* ---------- Dialog ---------- */

function MoveDialog() {
  return (
    <div className="fixed inset-0 z-40 flex items-center justify-center bg-black/50">
      <div role="dialog" aria-labelledby="move-title" className="w-[1020px] rounded-2xl bg-white px-[50px] pt-[41px] pb-[220px]">
        <h2 id="move-title" className="text-[40px] leading-[56px] font-medium text-[#212121]">
          Move to selected route
        </h2>
        <div className="relative mt-14">
          <fieldset className="h-[123px] rounded-2xl border-2 border-[#808080] bg-[#f7f7f7] ring-4 ring-[#ebf9e8]">
            <legend className="ml-4 pr-2 pl-3 text-[24px] leading-8 text-[#60d24c]">
              <label htmlFor="routes">Routes</label>
            </legend>
            <div className="flex h-[78px] items-center pr-3 pl-[26px]">
              <span className="h-[38px] w-[2px] bg-[#212121]" />
              <input id="routes" type="text" role="combobox" aria-expanded="true" className="h-14 min-w-0 flex-1 text-[32px] outline-none" />
              <button type="button" aria-label="Clear" className="flex size-12 items-center justify-center">
                <svg width="24" height="24" viewBox="0 0 24 24" stroke="#757575" strokeWidth="3" strokeLinecap="round">
                  <path d="M2 2L22 22M22 2L2 22" />
                </svg>
              </button>
              <button type="button" aria-label="Close list" className="flex size-14 items-center justify-center rounded-full bg-[#ecf5ea] text-[#60d24c]">
                <MdArrowDropUp className="size-12" />
              </button>
            </div>
          </fieldset>
          <ul
            role="listbox"
            className="absolute inset-x-0 top-full rounded-lg bg-white py-4 shadow-[0_2px_6px_rgba(0,0,0,0.35)]"
          >
            {routeOptions.map((option, index) => (
              <li
                key={option}
                role="option"
                aria-selected={index === 0}
                className={clsx(
                  'flex h-[72px] items-center px-8 text-[32px] text-[#212121]',
                  index === 0 ? 'bg-[#ebf9e8]' : 'bg-[#f1fbef]',
                )}
              >
                {option}
              </li>
            ))}
          </ul>
        </div>
      </div>
    </div>
  );
}

export default function App() {
  return (
    <div className="flex h-screen flex-col overflow-hidden bg-[#f5f5f5] font-['Noto_Sans',sans-serif]">
      <Header />
      <div className="flex min-h-0 flex-1">
        <Sidebar />
        <main className="min-w-0 flex-1 overflow-hidden pr-7 pl-[30px]">
          {/* Summary card, scrolled most of the way under the header */}
          <div className="mr-[6px] ml-[2px] -mt-[31px] grid h-[82px] grid-cols-4 rounded-b-xl bg-white px-10 text-[28px] leading-[42px] shadow-[0_12px_60px_rgba(0,0,0,0.2)]">
            <Labelled label="Orders:" value="30" />
            <div className="flex gap-5">
              <MdLocalShipping className="mt-1 size-7 text-[#757575]" />
              <Labelled label="Vehicles:" value="1" />
            </div>
            <div className="flex gap-5">
              <MdStraighten className="mt-1 size-7 text-[#757575]" />
              <Labelled label="Distance:" value="81.5 mi" />
            </div>
          </div>

          <div className="mt-[38px] grid grid-cols-[17fr_15fr] gap-6">
            <section>
              <h2 className="mb-5 text-[48px] leading-[64px] font-medium text-[#484848]">Visible routes</h2>
              <div className="mb-[41px] flex h-20 gap-5">
                {['Add orders', 'Add routes'].map((label) => (
                  <button
                    key={label}
                    type="button"
                    className="flex items-center gap-10 rounded-2xl bg-[#60d24c] px-5 text-[28px] font-medium text-white shadow-[0_3px_6px_rgba(0,0,0,0.4)]"
                  >
                    {label}
                    <MdArrowDropDown className="size-12" />
                  </button>
                ))}
                <button
                  type="button"
                  className="ml-auto rounded-2xl border-2 border-[#8a8a8a] px-5 text-[28px] font-medium text-[#303030]"
                >
                  Expand all
                </button>
              </div>
              <div className="flex flex-col gap-8">
                <RouteCard route={routeA} />
                <RouteCard route={routeB} />
              </div>
            </section>

            <section className="pt-[92px]">
              <MapPanel />
              <h2 className="mt-[26px] mb-5 text-[48px] leading-[64px] font-medium text-[#484848]">Hidden routes</h2>
              <RouteCard route={hiddenRoute} />
            </section>
          </div>
        </main>
      </div>
      <button
        type="button"
        aria-label="Open assistant"
        className="fixed right-[50px] bottom-[50px] z-30 size-[120px] rounded-full shadow-[0_10px_24px_rgba(0,0,0,0.45)]"
      >
        <AssistantBall />
      </button>
      <MoveDialog />
    </div>
  );
}
